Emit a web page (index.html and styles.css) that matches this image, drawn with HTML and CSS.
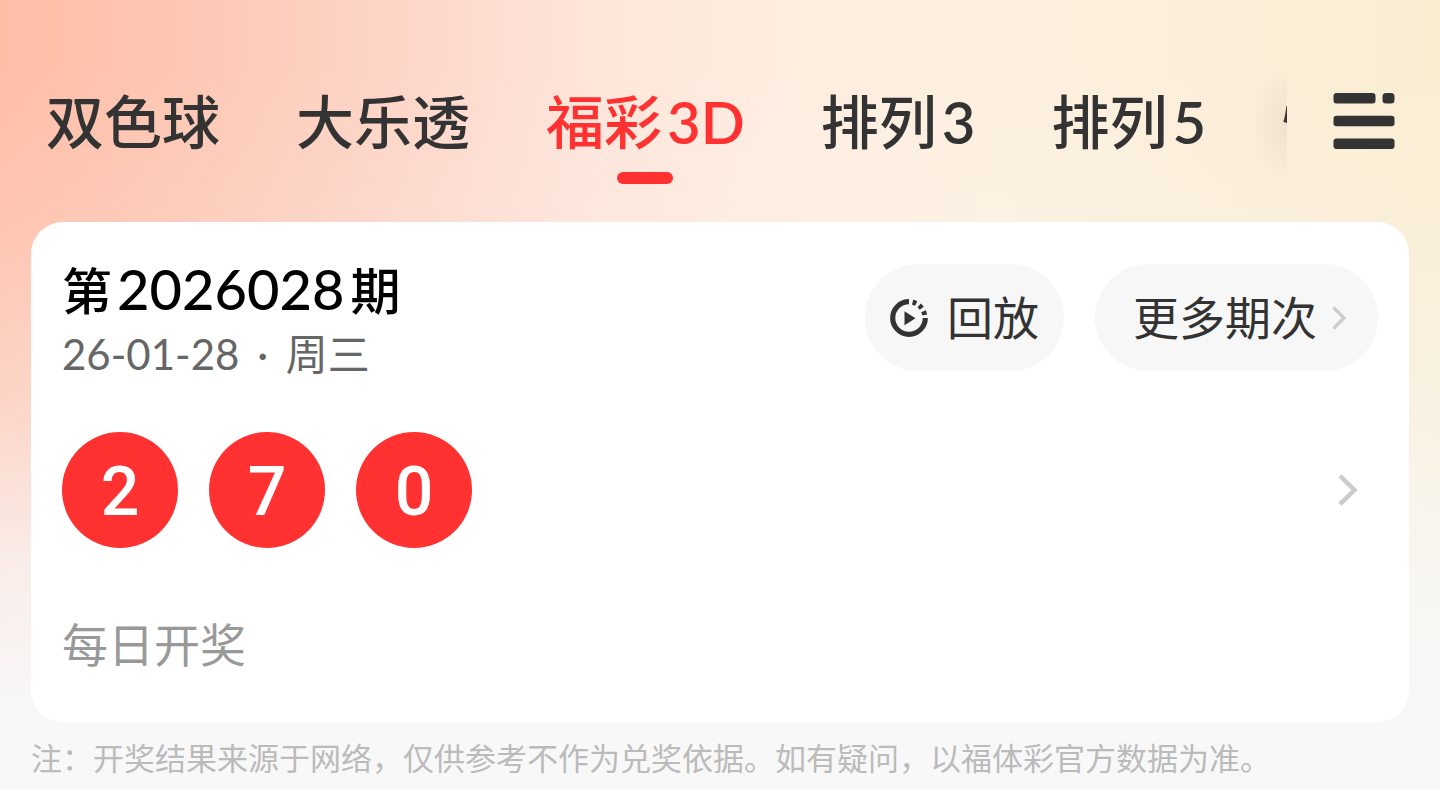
FILE: index.html
```html
<!DOCTYPE html>
<html lang="zh-CN">
<head>
<meta charset="utf-8">
<meta name="viewport" content="width=device-width, initial-scale=1">
<title>福彩3D 开奖</title>
<link rel="stylesheet" href="styles.css">
</head>
<body>
<header class="topbar">
  <nav class="tabs" aria-label="彩种">
    <a class="tab" href="#ssq">双色球</a>
    <a class="tab" href="#dlt">大乐透</a>
    <a class="tab tab-active" href="#fc3d" aria-current="page">福彩<span class="latin">3D</span></a>
    <a class="tab" href="#pl3">排列<span class="latin">3</span></a>
    <a class="tab" href="#pl5">排列<span class="latin">5</span></a>
    <a class="tab" href="#kl8">快乐<span class="latin">8</span></a>
  </nav>
  <button class="menu" type="button" aria-label="全部彩种">
    <svg width="62" height="56" viewBox="0 0 62 56" fill="#333" aria-hidden="true">
      <rect x="0.500" y="0" width="42" height="10.500" rx="3"/>
      <rect x="49.500" y="0" width="12" height="10.500" rx="3.500"/>
      <rect x="0.500" y="22.700" width="61" height="10.500" rx="3"/>
      <rect x="0.500" y="45.400" width="61" height="10.500" rx="3"/>
    </svg>
  </button>
</header>
<main class="content">
  <section class="card">
    <div class="card-head">
      <div class="issue">
        <h1 class="issue-title">第<span class="latin issue-number">2026028</span>期</h1>
        <p class="issue-date">26-01-28<span class="dot"> · </span>周三</p>
      </div>
      <div class="actions">
        <button class="pill pill-replay" type="button">
          <svg width="38" height="38" viewBox="0 0 38 38" fill="none" stroke="#333" aria-hidden="true">
            <path d="M19 2.700A16.300 16.300 0 1 0 35.300 19" stroke-width="5.200"/>
            <path d="M22.600 3.300A16 16 0 0 1 34.800 16.600" stroke-width="5" stroke-dasharray="3.800 3.500"/>
            <path d="M14.500 12.300V26.300L25.500 19.300Z" fill="#333" stroke="none"/>
          </svg>
          <span class="pill-label">回放</span>
        </button>
        <button class="pill pill-more" type="button">
          <span class="pill-label">更多期次</span>
          <svg width="15" height="24" viewBox="0 0 15 24" fill="none" stroke="#ccc" stroke-width="3.200" aria-hidden="true">
            <path d="M1.500 1.500L12 12L1.500 22.500"/>
          </svg>
        </button>
      </div>
    </div>
    <a class="result" href="#detail" aria-label="开奖详情">
      <span class="ball">2</span>
      <span class="ball">7</span>
      <span class="ball">0</span>
      <svg class="result-arrow" width="20" height="32" viewBox="0 0 20 32" fill="none" stroke="#ccc" stroke-width="4.500" aria-hidden="true">
        <path d="M2 1.800L16.500 16L2 30.200"/>
      </svg>
    </a>
    <p class="schedule">每日开奖</p>
  </section>
  <p class="note">注：开奖结果来源于网络，仅供参考不作为兑奖依据。如有疑问，以福体彩官方数据为准。</p>
</main>
</body>
</html>
```
FILE: styles.css
```css
* {
  box-sizing: border-box;
}

body {
  margin: 0;
  min-height: 100vh;
  font-family: "Noto Sans CJK SC", sans-serif;
  color: #333;
  background:
    linear-gradient(to bottom, rgba(248, 248, 248, 0) 60px, rgba(248, 248, 248, 0.12) 210px, rgba(248, 248, 248, 0.4) 400px, rgba(248, 248, 248, 0.8) 560px, #f8f8f8 720px),
    linear-gradient(to right, #ffbda6 0, #fdc8b5 14%, #fdd6c8 28%, #fee5da 41%, #feeee0 56%, #fdf0df 70%, #fbeed8 86%, #faedd2 100%);
}

h1,
p {
  margin: 0;
}

button {
  border: 0;
  font: inherit;
  color: inherit;
  cursor: pointer;
}

a {
  color: inherit;
  text-decoration: none;
}

svg {
  display: block;
  flex: none;
}

.topbar {
  display: flex;
  padding: 66px 0 38px;
}

.tabs {
  position: relative;
  flex: 1;
  min-width: 0;
  display: flex;
  gap: 76px;
  padding: 10px 0 0 46px;
  overflow: hidden;
}

.tabs::after {
  content: "";
  position: absolute;
  top: 0;
  right: 0;
  width: 40px;
  height: 118px;
  background: radial-gradient(ellipse 36px 58px at right center, rgba(90, 70, 60, 0.07), rgba(90, 70, 60, 0));
}

.tab {
  position: relative;
  flex: none;
  padding-bottom: 22px;
  font-size: 58px;
  font-weight: 500;
  line-height: 86px;
  white-space: nowrap;
}

.latin {
  margin-left: 5px;
  font-family: Lato, "Noto Sans CJK SC", sans-serif;
  font-weight: 600;
  line-height: 1;
}

.tab-active {
  color: #ff3131;
}

.tab-active::after {
  content: "";
  position: absolute;
  left: 50%;
  bottom: 0;
  width: 56px;
  height: 12px;
  margin-left: -28px;
  border-radius: 6px;
  background: #ff3131;
}

.menu {
  display: flex;
  align-items: flex-start;
  padding: 27px 45px 0 46px;
  background: none;
}

.content {
  padding: 0 31px;
}

.card {
  padding: 31px 31px 47px;
  border-radius: 32px;
  background: #fff;
}

.card-head {
  display: flex;
  justify-content: space-between;
}

.issue-title {
  font-size: 50px;
  font-weight: 500;
  line-height: 70px;
  color: #000;
}

.issue-number {
  margin-right: 6px;
  font-size: 56px;
  font-weight: 500;
}

.issue-date {
  font-family: Lato, "Noto Sans CJK SC", sans-serif;
  font-size: 42px;
  line-height: 62px;
  color: #666;
}

.dot {
  margin: 0 7px;
}

.actions {
  display: flex;
  align-items: flex-start;
  gap: 31px;
  padding-top: 11px;
}

.pill {
  display: flex;
  align-items: center;
  height: 107px;
  border-radius: 54px;
  background: #f7f7f7;
  font-size: 46px;
  line-height: 68px;
  white-space: nowrap;
}

.pill-label {
  padding-bottom: 6px;
}

.pill-replay {
  gap: 19px;
  padding: 0 25px;
}

.pill-more {
  gap: 15px;
  padding: 0 31px 0 38px;
}

.result {
  display: flex;
  align-items: center;
  gap: 31px;
  margin: 47px 0 61px;
}

.ball {
  display: flex;
  align-items: center;
  justify-content: center;
  width: 116px;
  height: 116px;
  padding-top: 4px;
  border-radius: 50%;
  background: #ff3131;
  font-family: Roboto, sans-serif;
  font-size: 68px;
  font-weight: 500;
  color: #fff;
}

.result-arrow {
  margin-left: auto;
  margin-right: 20px;
}

.schedule {
  font-size: 46px;
  line-height: 66px;
  color: #999;
}

.note {
  padding-top: 12px;
  font-size: 31px;
  line-height: 46px;
  color: #bbb;
}
```
